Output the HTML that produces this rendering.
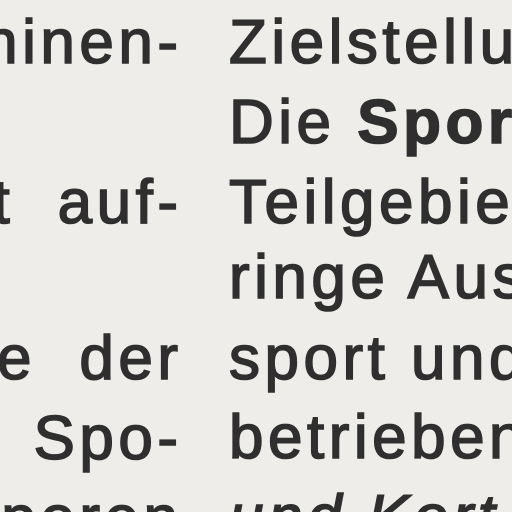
<!DOCTYPE html>
<html><head><meta charset="utf-8"><style>
html,body{margin:0;padding:0;width:512px;height:512px;overflow:hidden;background:#eeede9;}
#w{position:absolute;left:0;top:0;width:512px;height:512px;overflow:hidden;}
.l{position:absolute;font-family:"Liberation Sans",Arial,sans-serif;font-size:62px;color:#2f2f2f;letter-spacing:4.5px;white-space:nowrap;line-height:1;-webkit-text-stroke:1.6px #2f2f2f;}
.r{right:334px;text-align:right;margin-right:-4.5px;}
.c{left:229px;}
</style></head><body><div id="w">
<div class="l r" style="top:12px">hinen-</div>
<div class="l r" style="top:172px">t&nbsp; auf-</div>
<div class="l r" style="top:328px">e&nbsp; der</div>
<div class="l r" style="top:408px">Spo-</div>
<div class="l r" style="top:488px;height:24px;overflow:hidden">poren</div>
<div class="l c" style="top:12px">Zielstellung</div>
<div class="l c" style="top:92px">Die <b>Sport</b></div>
<div class="l c" style="top:172px">Teilgebiet</div>
<div class="l c" style="top:247px">ringe Aus</div>
<div class="l c" style="top:328px">sport und</div>
<div class="l c" style="top:407px">betrieben</div>
<div class="l c" style="top:487px;height:25px;overflow:hidden"><i>und Kort</i></div>
</div></body></html>
